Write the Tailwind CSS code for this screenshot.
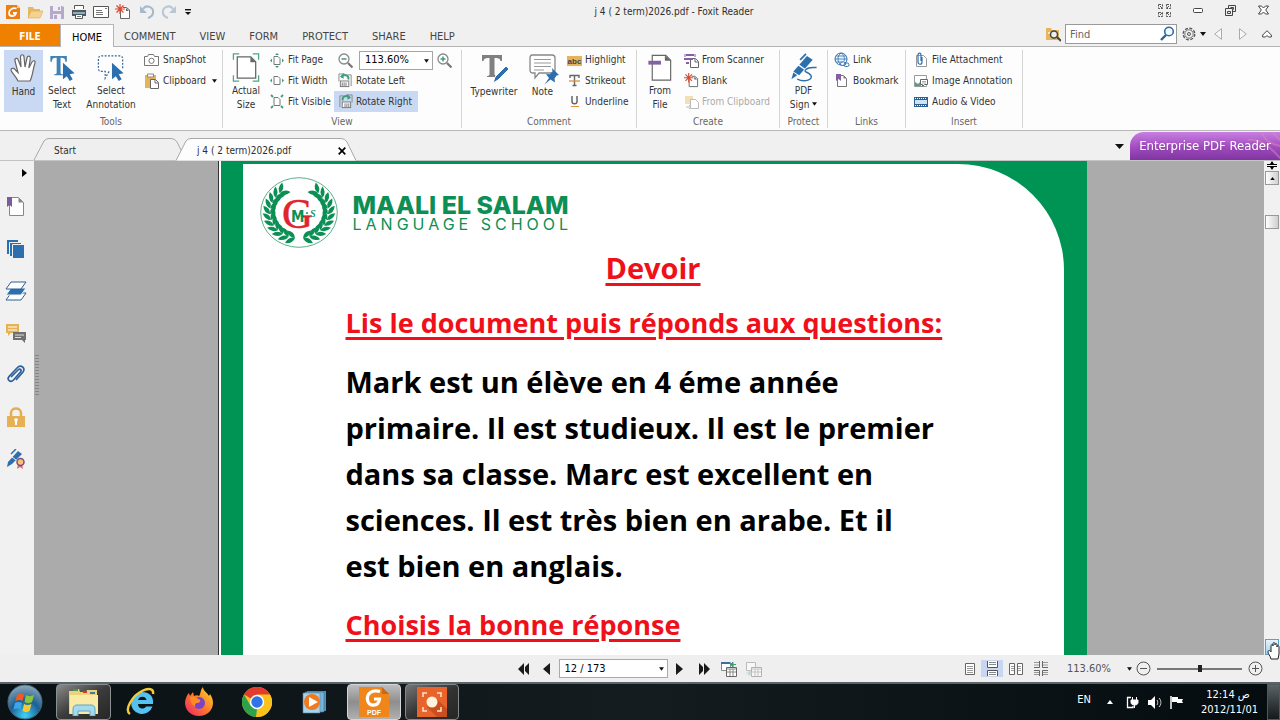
<!DOCTYPE html>
<html lang="en">
<head>
  <meta charset="UTF-8">
  <meta name="viewport" content="width=device-width, initial-scale=1.0">
  <title>j 4 ( 2 term)2026.pdf - Foxit Reader</title>
  <script src="https://cdn.jsdelivr.net/npm/@tailwindcss/browser@4"></script>
</head>
<body class="h-screen flex flex-col overflow-hidden bg-[#f0f0f0] font-['DejaVu_Sans_Condensed','Open_Sans',sans-serif] text-[10px] leading-[14px] text-[#2e2e2e]">

  <!-- Shared icons -->
  <svg class="hidden">
    <symbol id="down" viewBox="0 0 6 4"><path d="M0 0h6L3 4z" fill="#111"/></symbol>
    <symbol id="rotate" viewBox="0 0 16 16">
      <path d="M1 9V1h6M10 2h4v12" fill="none" stroke="#888"/>
      <rect x="2.500" y="8.500" width="9" height="6" fill="#fff" stroke="#777"/><path d="M4.500 10v4M6.500 10v4M8.500 10v4" stroke="#777"/>
      <path d="M11 7c1-4-3-6-6-4" fill="none" stroke="#3f9d78" stroke-width="2"/><path d="M6 0v6L2 4z" fill="#3f9d78"/>
    </symbol>
    <symbol id="pen" viewBox="0 0 30 32">
      <path d="M2 27l2-7 4 3z" fill="#2d6fae"/><path d="M4 19L18 3l6 4-14 16z" fill="#2d6fae"/>
      <path d="M9 12l7 5" stroke="#fff" stroke-width="1.300"/><path d="M11 7l6-6" stroke="#2d6fae" stroke-width="1.800"/>
      <path d="M8 27c8 4 17 0 14-4s-8-3-5-6 7-2 11-2" fill="none" stroke="#2d6fae" stroke-width="1.500"/>
    </symbol>
  </svg>

  <!-- Title bar -->
  <header class="h-6 shrink-0 flex items-center relative">
    <div class="flex items-center gap-[6px] pl-[5px]">
      <svg class="size-4" viewBox="0 0 16 16"><path d="M1 1h11l3 3v11H1z" fill="#ee7d12"/><path d="M12 1v3h3z" fill="#f8c48c"/><path d="M11.500 4.500C8 3.500 4 5.500 4 9c0 4 6 4 7 0H8" fill="none" stroke="#fff" stroke-width="1.800"/></svg>
      <svg class="size-4" viewBox="0 0 16 16"><path d="M1 14V3h5l1 2h6v3" fill="#e9b864"/><path d="M1 14L4 7h12l-3 7z" fill="#f7d28e" stroke="#dba850" stroke-width=".6"/></svg>
      <svg class="size-4" viewBox="0 0 16 16"><path d="M1 2h12l2 1v12H1z" fill="#b5a9cc"/><path d="M4 2h8v5H4zM4 10h8v5H4z" fill="#f0edf5"/><path d="M9 3h2v3H9zM5 11h3v4H5z" fill="#b5a9cc"/></svg>
      <svg class="size-4" viewBox="0 0 16 16"><path d="M3.500 5V1.500h9V5" fill="#fff" stroke="#555"/><path d="M1 6h14v6H1z" fill="#555"/><path d="M2 8h12v2H2z" fill="#7fb2cf"/><path d="M4.500 10.500h7v4h-7z" fill="#fff" stroke="#555"/><path d="M6 12.500h4" stroke="#777"/></svg>
      <svg class="size-4" viewBox="0 0 16 16"><path d="M.5 2.500h15v11H.5z" fill="#fff" stroke="#555"/><path d="M3 6.500h6M3 8.500h7M3 10.500h7M12 4.500h2" stroke="#777"/></svg>
      <svg class="size-4" viewBox="0 0 16 16"><path d="M5.500 5.500V14.500h9V6l-3-2.500H8" fill="#fff" stroke="#666"/><path d="M11 4v3h3z" fill="#666"/><path d="M5 0v10M0 5h10M1.500 1.500l7 7M8.500 1.500l-7 7" stroke="#d94a32" stroke-width="1.200"/></svg>
      <svg class="size-4 ml-[2px]" viewBox="0 0 16 16"><path d="M4 5c3-5 11-2 10 4-.4 3-2 4-5 5" fill="none" stroke="#a5b8cc" stroke-width="2"/><path d="M1 2v7h7z" fill="#a5b8cc"/></svg>
      <svg class="size-4" viewBox="0 0 16 16"><path d="M12 5C9 0 1 3 2 9c.4 3 2 4 5 5" fill="none" stroke="#b9c6d3" stroke-width="2"/><path d="M15 2v7H8z" fill="#b9c6d3"/></svg>
      <svg class="w-[6px] h-[7px] ml-[2px]" viewBox="0 0 6 7"><path d="M0 .7h6" stroke="#111" stroke-width="1.400"/><path d="M0 3h6L3 6z" fill="#111"/></svg>
    </div>
    <h1 class="absolute left-1/2 -translate-x-1/2 ml-[34px]">j 4 ( 2 term)2026.pdf - Foxit Reader</h1>
    <div class="ml-auto flex items-center gap-[22px] pr-[11px] pb-1">
      <svg class="size-[13px]" viewBox="0 0 13 13" fill="none" stroke="#555"><path d="M.5.500h4v4h-4zM8.500.500h4v4h-4zM.5 8.500h4v4h-4zM8.500 8.500h4v4h-4z" stroke-dasharray="2.500 1"/><path d="M2 2l2 2M11 2L9 4M2 11l2-2M11 11L9 9"/></svg>
      <svg class="w-[10px] h-[5px]" viewBox="0 0 10 5"><rect x=".5" y=".5" width="9" height="4" rx="1" fill="#fff" stroke="#444"/></svg>
      <svg class="size-[11px]" viewBox="0 0 11 11" fill="#f0f0f0" stroke="#444"><path d="M3.500.5h7v6h-7z"/><path d="M5.500 2.500h3v2"/><path d="M.5 3.500h7v7h-7z"/><path d="M2.500 6.500h3v2h-3z"/></svg>
      <svg class="w-[11px] h-[10px]" viewBox="0 0 11 10"><path d="M.5 1h3l2 2 2-2h3L7.700 5l2.800 4h-3l-2-2-2 2h-3l2.800-4z" fill="#fff" stroke="#444"/></svg>
    </div>
  </header>

  <!-- Ribbon tabs -->
  <nav class="h-[23px] shrink-0 flex items-stretch border-b border-[#b4b4b4] text-[11px]">
    <button class="w-[60px] bg-[#f08000] text-white font-bold text-[10px] pt-[3px]">FILE</button>
    <button class="w-[54px] -mb-px bg-[#fdfdfd] border border-b-0 border-[#b4b4b4] text-black pt-[3px]">HOME</button>
    <div class="flex gap-6 pl-[10px] pt-[4px] text-[#444]">
      <button>COMMENT</button>
      <button>VIEW</button>
      <button>FORM</button>
      <button>PROTECT</button>
      <button>SHARE</button>
      <button>HELP</button>
    </div>
    <div class="ml-auto flex items-center pb-[2px] pr-2">
      <svg class="size-4 mr-1" viewBox="0 0 16 16"><path d="M1 14V2h5l1 2h7v10z" fill="#e8b45c"/><path d="M3 7h8" stroke="#fbe6bd" stroke-width="2"/><circle cx="9" cy="8.500" r="3.500" fill="#eee" stroke="#444" stroke-width="1.500"/><path d="M12 11l4 4" stroke="#444" stroke-width="2"/></svg>
      <label class="relative block">
        <input type="text" placeholder="Find" aria-label="Find" class="block w-28 h-5 bg-white border border-[#9a9a9a] px-1 outline-none placeholder:text-[#666]">
        <svg class="absolute right-[2px] top-[2px] size-4" viewBox="0 0 16 16"><circle cx="10" cy="5.500" r="4.300" fill="#f4f9fd" stroke="#2a6ea8" stroke-width="1.600"/><path d="M7 9l-5 5" stroke="#2a6496" stroke-width="2.400"/></svg>
      </label>
      <button class="flex items-center gap-1 ml-[5px]" aria-label="Options">
        <svg class="size-[14px]" viewBox="0 0 14 14" fill="none" stroke="#555"><circle cx="7" cy="7" r="5.800" stroke-dasharray="3 1.500" stroke-width="1.300"/><circle cx="7" cy="7" r="4.200" stroke-width=".8"/><circle cx="7" cy="7" r="1.500"/></svg>
        <svg class="w-[6px] h-1"><use href="#down"/></svg>
      </button>
      <svg class="ml-2 w-2 h-3" viewBox="0 0 8 12"><path d="M7.500.7v10.600L.7 6z" fill="#f8f8f8" stroke="#aaa"/></svg>
      <svg class="ml-[17px] w-2 h-3" viewBox="0 0 8 12"><path d="M.5.700v10.600L7.300 6z" fill="#f8f8f8" stroke="#aaa"/></svg>
      <svg class="ml-[15px] w-[10px] h-2" viewBox="0 0 10 8"><path d="M5 .7L9.300 5v2H6.500L5 5.500 3.500 7H.7V5z" fill="#fff" stroke="#444"/></svg>
    </div>
  </nav>

  <!-- Ribbon -->
  <section class="h-[84px] shrink-0 flex bg-[#fdfdfd] border-b border-[#b8b8b8] pt-[3px] whitespace-nowrap text-[#333]">
    <div class="w-[223px] border-r border-[#d4d4d4] mb-[2px] flex flex-col">
      <div class="flex h-[62px] shrink-0 pl-1">
        <button class="w-[39px] shrink-0 bg-[#c9d9f3] flex flex-col items-center pt-[3px]">
          <svg class="size-8" viewBox="0 0 32 32"><path d="M10 28c-2-5-7-9-7-11s3-2 4-.5l3 3L7 8c-.6-3 2.500-3.500 3.300-1L13 14 12.500 4c0-3 3.300-3 3.500 0l1 10 2-9c.6-3 3.800-2 3.300.5L20.800 15 24 9c1.300-2.300 3.800-1 3 1-2 5-2 12-5 18z" fill="#fff" stroke="#666" stroke-width="1.200"/></svg>
          <span>Hand</span>
        </button>
        <button class="w-[38px] shrink-0 flex flex-col items-center pt-[3px]">
          <svg class="size-8" viewBox="0 0 32 32"><path d="M4 3h17v6h-1.500c-.5-3-1-4-5-4v15c0 1.500 1 2 2.500 2v1H8v-1c1.500 0 2.500-.5 2.500-2V5c-4 0-4.500 1-5 4H4z" fill="#3f82b8"/><path d="M17 10v17l4-3 3 5 3-2-3-5 5-1z" fill="#2d6fae"/></svg>
          <span>Select<br>Text</span>
        </button>
        <button class="w-[60px] shrink-0 flex flex-col items-center pt-[3px]">
          <svg class="size-8" viewBox="0 0 32 32"><path d="M14 19l-4 7v-7H6c-2 0-3-1-3-3V6c0-2 1-3 3-3h19c2 0 3 1 3 3v10" fill="none" stroke="#35689c" stroke-width="1.300" stroke-dasharray="2 1.500"/><path d="M17 10v17l4-3 3 5 3-2-3-5 5-1z" fill="#2d6fae"/></svg>
          <span>Select<br>Annotation</span>
        </button>
        <div class="grid grid-rows-3 pl-[3px]">
          <button class="flex items-center gap-1">
            <svg class="w-[15px] h-4" viewBox="0 0 15 16"><path d="M.5 4.500h3l1-2h5l1 2h4v9H.5z" fill="#fff" stroke="#777"/><circle cx="7.500" cy="8.800" r="2.600" fill="none" stroke="#777"/></svg>SnapShot
          </button>
          <button class="flex items-center gap-1">
            <svg class="w-[15px] h-4" viewBox="0 0 15 16"><path d="M1 2h11v13H1z" fill="#e5b45a"/><path d="M3.500 1h6v3h-6z" fill="#fff" stroke="#888"/><path d="M6.500 6.500h5l3 3v6h-8z" fill="#fff" stroke="#666"/><path d="M11 7v3h3" fill="none" stroke="#666"/></svg>Clipboard
            <svg class="w-[5px] h-1 ml-[2px]"><use href="#down"/></svg>
          </button>
        </div>
      </div>
      <div class="text-center text-[#666] pt-[3px]">Tools</div>
    </div>

    <div class="w-[239px] border-r border-[#d4d4d4] mb-[2px] flex flex-col">
      <div class="flex h-[62px] shrink-0 pl-[4px]">
        <button class="w-[38px] shrink-0 flex flex-col items-center pt-[3px]">
          <svg class="size-8" viewBox="0 0 32 32"><path d="M3 7V1h6M23 1h6v6M3 23v6h6M23 29h6v-6" fill="none" stroke="#4fa488" stroke-width="1.300"/><path d="M7 4h14l5 5v17H7z" fill="#fff" stroke="#666" stroke-width="1.300"/><path d="M20.500 4v5.500H26z" fill="#666"/></svg>
          <span>Actual<br>Size</span>
        </button>
        <div class="grid grid-rows-3 pl-[5px] w-[69px]">
          <button class="flex items-center gap-1"><svg class="w-[14px] h-[15px]" viewBox="0 0 14 15"><path d="M4 3.500h4l2 2v6H4z" fill="#fff" stroke="#777"/><path d="M7 0l2 2H5zM7 15l2-2H5zM0 7.500l2-2v4zM14 7.500l-2-2v4z" fill="#3f9d78"/></svg>Fit Page</button>
          <button class="flex items-center gap-1"><svg class="w-[14px] h-[15px]" viewBox="0 0 14 15"><path d="M4 3.500h4l2 2v6H4z" fill="#fff" stroke="#777"/><path d="M0 7.500l2-2v4zM14 7.500l-2-2v4z" fill="#3f9d78"/></svg>Fit Width</button>
          <button class="flex items-center gap-1"><svg class="w-[14px] h-[15px]" viewBox="0 0 14 15"><path d="M4 3.500h4l2 2v6H4z" fill="#fff" stroke="#777"/><path d="M1 1l2 2M13 1l-2 2M1 14l2-2M13 14l-2-2" stroke="#3f9d78" stroke-width="1.800"/></svg>Fit Visible</button>
        </div>
        <div class="grid grid-rows-3 w-[120px]">
          <div class="flex items-center pl-[4px]">
            <svg class="size-[15px] mr-[6px]" viewBox="0 0 15 15"><circle cx="6" cy="6" r="5" fill="#fff" stroke="#888" stroke-width="1.300"/><path d="M3.500 6h5" stroke="#3f9d78" stroke-width="1.500"/><path d="M10 10l4.500 4.500" stroke="#777" stroke-width="2.200"/></svg>
            <div class="relative">
              <select aria-label="Zoom level" class="block appearance-none w-[74px] h-[19px] border border-[#a5a5a5] bg-white pl-[5px] text-[11px] text-black"><option>113.60%</option></select>
              <svg class="absolute right-[4px] top-[8px] w-[5px] h-1"><use href="#down"/></svg>
            </div>
            <svg class="size-[15px] ml-1" viewBox="0 0 15 15"><circle cx="6" cy="6" r="5" fill="#fff" stroke="#888" stroke-width="1.300"/><path d="M3.500 6h5M6 3.500v5" stroke="#3f9d78" stroke-width="1.500"/><path d="M10 10l4.500 4.500" stroke="#777" stroke-width="2.200"/></svg>
          </div>
          <button class="flex items-center gap-[3px] pl-[4px]"><svg class="size-[15px]"><use href="#rotate"/></svg>Rotate Left</button>
          <button class="flex items-center gap-[3px] pl-[4px] w-[84px] bg-[#c9d9f3]"><svg class="size-[15px] -scale-x-100"><use href="#rotate"/></svg>Rotate Right</button>
        </div>
      </div>
      <div class="text-center text-[#666] pt-[3px]">View</div>
    </div>

    <div class="w-[175px] border-r border-[#d4d4d4] mb-[2px] flex flex-col">
      <div class="flex h-[62px] shrink-0 pl-[3px]">
        <button class="w-[58px] shrink-0 flex flex-col items-center pt-[3px]">
          <svg class="size-8" viewBox="0 0 32 32"><path d="M4 2h20v6h-1.500c-.5-2-1-3-6-3v16c0 1.500 1 2 2.500 2v1H9v-1c1.500 0 2.500-.5 2.500-2V5c-5 0-5.500 1-6 3H4z" fill="#808080"/><path d="M15 30l2-6L28 13l3 3-11 11z" fill="#2d6fae" stroke="#fdfdfd"/></svg>
          <span>Typewriter</span>
        </button>
        <button class="w-[39px] shrink-0 flex flex-col items-center pt-[3px]">
          <svg class="size-8" viewBox="0 0 32 32"><path d="M5 2h20c2 0 3 1 3 3v12c0 2-1 3-3 3H12l-4 5v-5H6c-2 0-3-1-3-3V5c0-2 1-3 2-3z" fill="#fff" stroke="#888" stroke-width="1.300"/><path d="M7 6.500h17M7 10h17M7 13.500h17M7 17h10" stroke="#999"/><path d="M25 15l7 7-2.500.5-2 3 .5 4-4.500-3-6 5 4.500-6.500-3-4 4 .3 2.500-3z" fill="#2d6fae"/></svg>
          <span>Note</span>
        </button>
        <div class="grid grid-rows-3 pl-[5px]">
          <button class="flex items-center gap-[3px]"><svg class="w-[15px] h-[15px]" viewBox="0 0 15 15"><path d="M0 3h15v10H0z" fill="#e5b45a"/><text x="7.500" y="11" text-anchor="middle" font-family="Liberation Sans" font-weight="bold" font-size="8" fill="#444">abc</text></svg>Highlight</button>
          <button class="flex items-center gap-[3px]"><svg class="w-[15px] h-[15px]" viewBox="0 0 15 15"><path d="M3 5V2.500h9V5M7.500 2.500v10M5.500 12.500h4" fill="none" stroke="#666" stroke-width="1.400"/><path d="M2 8h11" stroke="#e0913c" stroke-width="1.300"/></svg>Strikeout</button>
          <button class="flex items-center gap-[3px]"><svg class="w-[15px] h-[15px]" viewBox="0 0 15 15"><path d="M5 2v5.500c0 3 5 3 5 0V2" fill="none" stroke="#666" stroke-width="1.500"/><path d="M4 12.500h8" stroke="#e0913c"/></svg>Underline</button>
        </div>
      </div>
      <div class="text-center text-[#666] pt-[3px]">Comment</div>
    </div>

    <div class="w-[143px] border-r border-[#d4d4d4] mb-[2px] flex flex-col">
      <div class="flex h-[62px] shrink-0 pl-1">
        <button class="w-[38px] shrink-0 flex flex-col items-center pt-[3px]">
          <svg class="size-8" viewBox="0 0 32 32"><path d="M8 2.500h14l5 5V28H8z" fill="#fff" stroke="#666" stroke-width="1.200"/><path d="M21 2.500V8h6z" fill="#666"/><path d="M4 8h13v4H4z" fill="#8560a0"/></svg>
          <span>From<br>File</span>
        </button>
        <div class="grid grid-rows-3 pl-[5px]">
          <button class="flex items-center gap-[3px]"><svg class="size-[15px]" viewBox="0 0 15 15"><path d="M6.500 5.500h5l3 3v6h-8z" fill="#fff" stroke="#666"/><path d="M11 6v3h3" fill="none" stroke="#666"/><path d="M2 2h8M0 6h9M2 10h3" stroke="#8560a0" stroke-width="1.800"/><path d="M1 1v3M11 1v3" stroke="#8560a0"/></svg>From Scanner</button>
          <button class="flex items-center gap-[3px]"><svg class="size-[15px]" viewBox="0 0 16 16"><path d="M5.500 5.500V14.500h9V6l-3-2.500H8" fill="#fff" stroke="#666"/><path d="M11 4v3h3z" fill="#666"/><path d="M5 0v10M0 5h10M1.500 1.500l7 7M8.500 1.500l-7 7" stroke="#d94a32" stroke-width="1.200"/></svg>Blank</button>
          <button disabled class="flex items-center gap-[3px] text-[#aaa]"><svg class="size-[15px]" viewBox="0 0 15 15"><path d="M1 2h8v8H1z" fill="#f2dfb8"/><path d="M6.500 5.500h5l3 3v6h-8z" fill="#fff" stroke="#bbb"/><path d="M2 13h5M5 11l2 2-2 2" fill="none" stroke="#bbb"/></svg>From Clipboard</button>
        </div>
      </div>
      <div class="text-center text-[#666] pt-[3px]">Create</div>
    </div>

    <div class="w-[48px] border-r border-[#d4d4d4] mb-[2px] flex flex-col">
      <button class="h-[62px] shrink-0 flex flex-col items-center pt-[3px]">
        <svg class="w-[30px] h-8"><use href="#pen"/></svg>
        <span>PDF<br>Sign <svg class="inline w-[5px] h-1 mb-[2px]"><use href="#down"/></svg></span>
      </button>
      <div class="text-center text-[#666] pt-[3px]">Protect</div>
    </div>

    <div class="w-[78px] border-r border-[#d4d4d4] mb-[2px] flex flex-col">
      <div class="h-[62px] shrink-0 grid grid-rows-3 pl-[6px]">
        <button class="flex items-center gap-[3px]"><svg class="size-4" viewBox="0 0 16 16"><circle cx="7" cy="7" r="6" fill="#eef5fb" stroke="#2d6fae"/><path d="M1 7h12M2 4h10M2 10h7M7 1c-4 3-4 9 0 12M7 1c3 2 4 5 3 8" fill="none" stroke="#2d6fae" stroke-width=".8"/><rect x="6.500" y="10" width="5" height="3.500" rx="1.700" fill="#fff" stroke="#2d6fae"/><rect x="10" y="11" width="5" height="3.500" rx="1.700" fill="none" stroke="#2d6fae"/></svg>Link</button>
        <button class="flex items-center gap-[3px]"><svg class="size-4" viewBox="0 0 16 16"><path d="M3.500 2.500h6l3 3v8h-9z" fill="#fff" stroke="#777"/><path d="M9.500 2.500v3h3z" fill="#777"/><path d="M2 1h5v7L4.500 6 2 8z" fill="#8560a0"/></svg>Bookmark</button>
      </div>
      <div class="text-center text-[#666] pt-[3px]">Links</div>
    </div>

    <div class="w-[117px] border-r border-[#d4d4d4] mb-[2px] flex flex-col">
      <div class="h-[62px] shrink-0 grid grid-rows-3 pl-[7px]">
        <button class="flex items-center gap-[3px]"><svg class="size-4" viewBox="0 0 16 16"><path d="M3.500 3.500h7l3 3v8h-10z" fill="#fff" stroke="#999"/><path d="M9 5v5c0 3-4 3-4 0V3c0-2.500 3-2.500 3 0v6" fill="none" stroke="#2d6fae" stroke-width="1.200"/></svg>File Attachment</button>
        <button class="flex items-center gap-[3px]"><svg class="size-4" viewBox="0 0 16 16"><path d="M1.500 2.500h12v11h-12z" fill="#fff" stroke="#999"/><path d="M2 13V9l3 2 3-3v5z" fill="#4fa37f"/><path d="M7.500 6.500h7v5h-3l-2 2v-2h-2z" fill="#fff" stroke="#666"/><path d="M9 8.500h4M9 10h4" stroke="#888" stroke-width=".7"/></svg>Image Annotation</button>
        <button class="flex items-center gap-[3px]"><svg class="size-4" viewBox="0 0 16 16"><path d="M1 3h14v10H1z" fill="#2f6092"/><path d="M2 6h12v4H2z" fill="#cfe3f4"/><path d="M2 4.500h12M2 11.500h12" stroke="#fff" stroke-dasharray="1 1"/></svg>Audio &amp; Video</button>
      </div>
      <div class="text-center text-[#666] pt-[3px]">Insert</div>
    </div>
  </section>

  <!-- Document tabs -->
  <div class="h-[30px] shrink-0 flex items-end justify-between border-b border-[#c4c4c4]">
    <div class="flex items-end pl-[34px] h-full">
      <div class="relative w-[148px] h-[22px] flex items-center pt-1">
        <svg class="absolute inset-0 w-[152px] h-[22px] overflow-visible" viewBox="0 0 152 22"><path d="M0 22L10 3Q12 .5 15 .5H137Q141 .5 143 4L152 22" fill="#efefef" stroke="#a8a8a8"/></svg>
        <button class="relative pl-[20px]">Start</button>
      </div>
      <div class="relative -ml-[6px] w-[180px] h-[22px] flex items-center pt-1">
        <svg class="absolute inset-0 w-[180px] h-[22px] overflow-visible" viewBox="0 0 180 22"><path d="M0 22.500L10 3Q12 .5 15 .5H165Q169 .5 171 4L180 22.500" fill="#fdfdfd" stroke="#a8a8a8"/></svg>
        <button class="relative pl-[21px]">j 4 ( 2 term)2026.pdf</button>
        <button class="relative ml-auto mr-[10px]" aria-label="Close tab"><svg class="size-2" viewBox="0 0 8 8"><path d="M.7.700l6.600 6.600M7.300.700L.7 7.300" stroke="#000" stroke-width="1.700"/></svg></button>
      </div>
    </div>
    <div class="flex items-center">
      <svg class="w-[9px] h-[5px] mr-[6px]" viewBox="0 0 6 4" preserveAspectRatio="none"><path d="M0 0h6L3 4z" fill="#111"/></svg>
      <a href="#" class="relative w-[150px] h-[28px] flex items-center justify-center overflow-hidden bg-gradient-to-b from-[#c77fe0] via-[#a64fc4] to-[#7f35a0] text-white text-[13px] whitespace-nowrap rounded-tl-[14px]">
        <svg class="absolute right-0 top-0 w-10 h-7" viewBox="0 0 40 28" fill="none" stroke="#d98bb0" stroke-width="2" opacity=".5"><path d="M8 8c10-2 20 4 32 18M22 0c2 8 8 12 18 14M32 0l8 8"/></svg>
        <span class="relative drop-shadow-sm">Enterprise PDF Reader</span>
      </a>
    </div>
  </div>

  <!-- Work area -->
  <main class="flex-1 min-h-0 flex">
    <aside class="w-[34px] shrink-0 flex flex-col items-center bg-[#f1f1f1] pt-2">
      <svg class="w-[5px] h-2 ml-[14px] mb-[20px]" viewBox="0 0 5 8"><path d="M0 0v8l5-4z" fill="#000"/></svg>
      <div class="flex flex-col gap-[22px] pr-[2px]">
        <svg class="size-5" viewBox="0 0 20 20"><path d="M3.500.500h9l5 5v13h-14z" fill="#fff" stroke="#888"/><path d="M12.500.500v5h5z" fill="#888"/><path d="M1 0h5v10L3.500 8 1 10z" fill="#7d5a9c"/></svg>
        <svg class="size-5" viewBox="0 0 20 20"><path d="M1 1h11v14H1z" fill="#2d6fae"/><path d="M3.500 3.500h12v14h-12z" fill="#2d6fae" stroke="#f1f1f1"/><path d="M6.500 5.500h12v14h-12z" fill="#2d6fae" stroke="#f1f1f1"/></svg>
        <svg class="w-[22px] h-5 -mx-px" viewBox="0 0 22 20"><path d="M6 12h15l-5 7H1z" fill="#fff" stroke="#2d5f94"/><path d="M6 7h15l-5 7H1z" fill="#2d6fae" stroke="#f1f1f1"/><path d="M6 1h15l-5 7H1z" fill="#fff" stroke="#2d5f94"/></svg>
        <svg class="size-5" viewBox="0 0 20 20"><path d="M0 1h13v9H5l-3 3v-3H0z" fill="#e5b257"/><path d="M2 4h9M2 7h9" stroke="#fff"/><path d="M7 9h13v8h-1v3l-3-3H7z" fill="#707070"/><path d="M9 12h9M9 14.500h6" stroke="#ddd"/></svg>
        <svg class="size-5" viewBox="0 0 20 20"><path d="M5 12l7-7c2-2 4 0 2.500 2l-7 8c-3 3-7 0-4.500-3.500L11 3c4-4 9 0 6 4l-7 8" fill="none" stroke="#2d5f9c" stroke-width="1.700"/></svg>
        <svg class="size-5" viewBox="0 0 20 20"><path d="M5 10V6c0-6 10-6 10 0v4" fill="none" stroke="#e3ae52" stroke-width="2.500"/><path d="M1 9h18v11H1z" fill="#e8b055"/><circle cx="10" cy="13" r="1.800" fill="#fff"/><path d="M10 13v5" stroke="#fff" stroke-width="2"/></svg>
        <svg class="size-5" viewBox="0 0 20 20"><path d="M1 18l1-5L12 2l4 3L6 15z" fill="#2d6fae"/><path d="M6 8l4 3" stroke="#f1f1f1"/><path d="M5 5l5-5" stroke="#2d6fae" stroke-width="1.500"/><path d="M12 15l-1 5 3-2 3 2-1-5z" fill="#d66"/><circle cx="14.500" cy="13" r="3.500" fill="#f4c46a" stroke="#7d4a94" stroke-width="1.500"/></svg>
      </div>
    </aside>

    <div class="flex-1 min-w-0 flex bg-[#ababab] overflow-hidden">
      <div class="w-[6px] shrink-0 flex flex-col justify-center items-center pb-[66px]">
        <svg class="w-1 h-[41px]" viewBox="0 0 4 41"><path d="M2 0v41" stroke="#868686" stroke-width="4" stroke-dasharray="1 2"/></svg>
      </div>
      <article class="mx-auto w-[869px] shrink-0 border-l border-l-[#333]">
        <div class="h-full bg-[#009454] border-l-2 border-l-white pl-[22px] pr-[23px] pt-[3px]">
          <div class="h-full bg-white rounded-tr-[106px] overflow-hidden text-black font-['Comic_Sans_MS','Open_Sans',sans-serif] font-bold text-[27px] leading-[46px]">
            <div class="flex items-center pl-[17px] pt-[13px]">
              <svg class="w-[78px] h-[71px]" viewBox="0 0 78 71">
                <ellipse cx="39" cy="35.500" rx="38.300" ry="34.800" fill="#fff" stroke="#2f9a6b" stroke-width=".8"/>
                <g id="wreath" fill="#0c8f55"></g>
                <text x="22" y="51" font-family="Liberation Serif" font-weight="normal" font-size="43" fill="#e0242c" stroke="#e0242c" stroke-width=".5">G</text>
                <text x="31" y="45" font-family="DejaVu Sans Condensed" font-size="15" fill="#0c8f55">M</text>
                <text x="50" y="40" font-family="Liberation Serif" font-weight="normal" font-style="italic" font-size="15" fill="#0c8f55">s</text>
                <circle cx="47" cy="36" r="1" fill="#0c8f55"/>
              </svg>
              <div class="pl-[15px] pt-[2px] text-[#0c8f55] font-[Inter,sans-serif] whitespace-nowrap">
                <div class="text-[25px] leading-[20px] font-extrabold">MAALI EL SALAM</div>
                <div class="text-[16px] leading-[18px] font-normal tracking-[4px]">LANGUAGE SCHOOL</div>
              </div>
            </div>
            <div class="px-[103px] whitespace-nowrap">
              <h2 class="-mt-px text-center text-[29px] leading-[42px] text-[#f0101a] underline decoration-[3px] underline-offset-[4px]">Devoir</h2>
              <h3 class="mt-[11px] text-[#f0101a] underline decoration-[3px] underline-offset-[4px]">Lis le document puis réponds aux questions:</h3>
              <p class="mt-[13px] text-[29px]">Mark est un élève en 4 éme année<br>primaire. Il est studieux. Il est le premier<br>dans sa classe. Marc est excellent en<br>sciences. Il est très bien en arabe. Et il<br>est bien en anglais.</p>
              <h3 class="mt-[13px] text-[#f0101a] underline decoration-[3px] underline-offset-[4px]">Choisis la bonne réponse</h3>
            </div>
          </div>
        </div>
      </article>
    </div>

    <!-- Scroll bar -->
    <div class="w-4 shrink-0 bg-[#f1f1f1] flex flex-col items-center">
      <svg class="w-[10px] h-[9px]" viewBox="0 0 10 9"><path d="M0 3.500h10M0 5.500h10" stroke="#000"/><path d="M5 0l2 3H3zM5 9l2-3H3z" fill="#000"/></svg>
      <button aria-label="Scroll up" class="mt-px size-[14px] border border-[#999] bg-gradient-to-r from-white to-[#d0d0d0] flex items-center justify-center"><svg class="w-[5px] h-[3px] rotate-180"><use href="#down"/></svg></button>
      <div class="mt-[30px] size-[14px] border border-[#999] bg-gradient-to-r from-white to-[#cfcfcf]"></div>
      <button aria-label="Scroll down" class="relative mt-auto w-[14px] h-4 border border-[#5f9fc0] bg-gradient-to-b from-[#e6f5fc] to-[#9ed2ee]">
        <svg class="absolute left-[2px] top-[2px] w-[15px] h-[19px] overflow-visible z-10" viewBox="0 0 15 19"><path d="M3 17C2 13 0 12 0 10s2-2 3 0V4c0-2 2-2 2 0V2c0-2 2-2 2 0v1c0-2 2-2 2 0v2c0-2 2-2 2 0v7l-1 5z" fill="#fff" stroke="#222"/></svg>
      </button>
    </div>
  </main>

  <!-- Status bar -->
  <footer class="h-[27px] shrink-0 flex items-center bg-[#efefef] text-[11px]">
    <div class="flex-1"></div>
    <div class="flex items-center pl-[16px]">
      <button aria-label="First page"><svg class="w-3 h-3" viewBox="0 0 12 12"><path d="M6 0v12L0 6zM11 0v12L7 8V4z" fill="#1a1a1a"/></svg></button>
      <button aria-label="Previous page" class="ml-[13px]"><svg class="w-[7px] h-3" viewBox="0 0 7 12"><path d="M7 0v12L0 6z" fill="#1a1a1a"/></svg></button>
      <div class="relative ml-[9px]">
        <select aria-label="Page" class="block appearance-none w-[109px] h-[19px] bg-white border border-[#aaa] pl-[5px] text-black"><option>12 / 173</option></select>
        <svg class="absolute right-[4px] top-[8px] w-[5px] h-1"><use href="#down"/></svg>
      </div>
      <button aria-label="Next page" class="ml-2"><svg class="w-[7px] h-3" viewBox="0 0 7 12"><path d="M0 0v12l7-6z" fill="#1a1a1a"/></svg></button>
      <button aria-label="Last page" class="ml-[15px]"><svg class="w-3 h-3" viewBox="0 0 12 12"><path d="M6 0v12l6-6zM1 0v12l4-4V4z" fill="#1a1a1a"/></svg></button>
      <svg class="ml-[11px] w-4 h-4" viewBox="0 0 16 16"><path d="M.5 1.500h9v8h-9z" fill="#fff" stroke="#888"/><path d="M0 1h9v2H0z" fill="#3a6f9f"/><path d="M5.500 6.500h10v9h-10z" fill="#fff" stroke="#666"/><path d="M6 8h9M6 11h9M9 8v7M12 8v7" stroke="#888"/><path d="M15 3.500h-4M12 1L9.500 3.500 12 6z" fill="#3f9d78" stroke="#3f9d78"/></svg>
      <svg class="ml-[9px] w-4 h-4" viewBox="0 0 16 16" opacity=".5"><path d="M.5 1.500h9v8h-9z" fill="#fff" stroke="#888"/><path d="M5.500 6.500h10v9h-10z" fill="#fff" stroke="#777"/><path d="M6 8h9M6 11h9M9 8v7M12 8v7" stroke="#999"/><path d="M0 12h5M3 9.500L5.500 12 3 14.500z" fill="#9bb" stroke="#9bb"/></svg>
    </div>
    <div class="flex-1 flex items-center justify-end pr-[17px]">
      <button aria-label="Single page" class="w-[22px] h-[17px] flex justify-center items-center"><svg class="w-[10px] h-3" viewBox="0 0 10 12"><path d="M.5.500h9v11h-9z" fill="#fff" stroke="#666"/><path d="M2 3.500h6M2 5.500h6M2 7.500h6M2 9.500h6" stroke="#999"/></svg></button>
      <button aria-label="Continuous" class="w-[22px] h-[17px] flex justify-center items-center bg-[#c9d6ef]"><svg class="w-[11px] h-[15px]" viewBox="0 0 11 15"><path d="M.5 0v6.500h10V0M.5 15V9.500h10V15" fill="#fff" stroke="#555"/><path d="M2 1.500h7M2 3.500h7M2 11.500h7M2 13.500h7" stroke="#888"/></svg></button>
      <button aria-label="Facing" class="w-[26px] h-[17px] flex justify-center items-center"><svg class="w-[14px] h-3" viewBox="0 0 14 12"><path d="M.5.500h5v11h-5zM8.500.500h5v11h-5z" fill="#fff" stroke="#666"/><path d="M2 3.500h3M2 5.500h3M2 7.500h3M9 3.500h3M9 5.500h3M9 7.500h3" stroke="#999"/></svg></button>
      <button aria-label="Continuous facing" class="w-[23px] h-[17px] flex justify-center items-center"><svg class="w-[14px] h-[15px]" viewBox="0 0 14 15"><path d="M5.500 0v6.500H0M8.500 0v6.500H14M5.500 15V9.500H0M8.500 15V9.500H14" fill="none" stroke="#666"/><path d="M0 1.500h5M0 4h5M9 1.500h5M9 4h5M0 11.500h5M0 13.500h5M9 11.500h5M9 13.500h5" stroke="#999"/></svg></button>
      <span class="ml-[15px] w-[60px] text-[#555]">113.60%</span>
      <svg class="w-[5px] h-1 mr-[4px]"><use href="#down"/></svg>
      <button aria-label="Zoom out"><svg class="size-[15px]" viewBox="0 0 15 15" fill="none" stroke="#555"><circle cx="7.500" cy="7.500" r="6.500"/><path d="M4 7.500h7"/></svg></button>
      <input type="range" aria-label="Zoom" class="mx-[6px] w-[85px] h-[2px] appearance-none bg-[#777] [&::-webkit-slider-thumb]:appearance-none [&::-webkit-slider-thumb]:w-1 [&::-webkit-slider-thumb]:h-[7px] [&::-webkit-slider-thumb]:bg-[#222]">
      <button aria-label="Zoom in"><svg class="size-[15px]" viewBox="0 0 15 15" fill="none" stroke="#555"><circle cx="7.500" cy="7.500" r="6.500"/><path d="M4 7.500h7M7.500 4v7"/></svg></button>
    </div>
  </footer>

  <!-- Taskbar -->
  <div class="h-[38px] shrink-0 flex items-center bg-gradient-to-r from-[#0a1115] via-[#141c20] to-[#050c10] border-t-2 border-[#59636a] text-white">
    <div class="flex items-center h-full">
      <button aria-label="Start" class="w-[50px] flex justify-center">
        <svg class="size-9" viewBox="0 0 36 36">
          <defs><radialGradient id="orb" cx=".5" cy=".9" r=".9"><stop offset="0" stop-color="#3bd5fb"/><stop offset=".5" stop-color="#1d5f92"/><stop offset="1" stop-color="#8fa9ba"/></radialGradient></defs>
          <circle cx="18" cy="18" r="17" fill="url(#orb)" stroke="#44697c"/>
          <path d="M10 11c2-2 5-2 7-.5l-1.500 6.500c-2-1.500-5-1.500-7 0z" fill="#ee5b25"/><path d="M19 11c2 1.500 5 1.500 8 0l-2 7c-2 1.500-5 1.500-7.500 0z" fill="#8bc53f"/>
          <path d="M8 19c2-1.500 5-1.500 7 0l-1.500 6.500c-2-1.500-5-1.500-7 0z" fill="#3fa4e8"/><path d="M17 20c2 1.500 5 1.500 7.500 0l-2 7c-2 1.500-5 1.500-7 0z" fill="#fdc82f"/>
        </svg>
      </button>
      <button aria-label="Explorer" class="ml-[6px] w-[55px] h-9 rounded-sm border border-[#8a8f92] bg-gradient-to-br from-[#8b8b8b] via-[#3b3b3b] to-[#262626] flex justify-center items-center">
        <svg class="w-8 h-7" viewBox="0 0 32 28"><path d="M1 3h5l1-2h4l1 3 6 0 1-2h10v24H1z" fill="#ecd27a"/><path d="M2 7h28v19H2z" fill="#f9eba6"/><path d="M5 1h5v2H5z" fill="#3aa14a"/><path d="M15 3h4v2h-4z" fill="#d33"/><path d="M22 4h5v2h-5z" fill="#47a"/><path d="M5 28v-7c0-3 2-4 4-4h14c2 0 4 1 4 4v7h-5v-5H10v5z" fill="#a5d9ee" stroke="#5fa5c8"/></svg>
      </button>
      <button aria-label="Internet Explorer" class="w-[60px] flex justify-center">
        <svg class="size-[30px]" viewBox="0 0 30 30"><path d="M16 5a11 11 0 1 0 10.500 14.500h-6.500c-2 3.500-8 2.500-8-2.500h15C28 9 23 5 16 5zm-4 8c1-4.500 8-4.500 8.500 0z" fill="#54c1f0"/><path d="M4 27C-2 23 6 9 16 4c6-3 12-3 11 3" fill="none" stroke="#f5cb32" stroke-width="2.400"/></svg>
      </button>
      <button aria-label="Firefox" class="w-[56px] flex justify-center">
        <svg class="size-[30px]" viewBox="0 0 30 30"><defs><linearGradient id="fox" x1="1" y1="0" x2="0" y2="1"><stop offset="0" stop-color="#ffe226"/><stop offset=".5" stop-color="#ff7a2a"/><stop offset="1" stop-color="#ee1c6a"/></linearGradient></defs><path d="M15 29C7 29 1 23 1 16 1 12 3 8 5 6l1 3 3-4 1 4c2-1 4-1 5 0 2-2 1-6 4-9 0 4 4 5 6 9l1-2c2 3 3 6 3 9 0 7-6 13-14 13z" fill="url(#fox)"/><circle cx="15" cy="16" r="6" fill="#7a44c9"/><path d="M6 10c3 0 6-1 8 2 3 0 3 3 0 4-3 0-4 2-2 4-4-1-6-6-6-10z" fill="#ff8a26"/></svg>
      </button>
      <button aria-label="Chrome" class="w-[60px] flex justify-center">
        <svg class="size-[30px]" viewBox="0 0 30 30"><circle cx="15" cy="15" r="15" fill="#fbc21c"/><path d="M15 15L2 7.500a15 15 0 0 1 26 0z" fill="#e33b2e"/><path d="M2 7.500L8.500 18.500 15 22l-1 8A15 15 0 0 1 2 7.500z" fill="#2da24c"/><path d="M15 7.500h13a15 15 0 0 1-14 22.500l7-12z" fill="#fbc21c"/><circle cx="15" cy="15" r="7.200" fill="#fff"/><circle cx="15" cy="15" r="5.700" fill="#2d74e7"/></svg>
      </button>
      <button aria-label="Media Player" class="w-[55px] flex justify-center">
        <svg class="w-[25px] h-6" viewBox="0 0 25 24"><path d="M5 1h19v20H5z" fill="#4f94bd"/><path d="M3 2h19v20H3z" fill="#79b4d6" stroke="#346f96" stroke-width=".6"/><path d="M1 3h17v20H1z" fill="#a9d3e8" stroke="#4685ab" stroke-width=".6"/><circle cx="10" cy="12" r="8" fill="#ef7a22"/><path d="M7 7l9 5-9 5z" fill="#fff"/></svg>
      </button>
      <button aria-label="Foxit Reader" class="ml-[5px] w-[54px] h-9 rounded-sm border border-[#d5d5d5] bg-gradient-to-b from-[#bdbdbd] via-[#8e8e8e] to-[#b0b0b0] flex justify-center items-center">
        <svg class="size-[30px]" viewBox="0 0 30 30"><path d="M0 0h23l7 7v23H0z" fill="#f08519"/><path d="M23 0v7h7z" fill="#c96a12"/><path d="M21 4.500C13 2 7.500 7 8.500 13c1 7 11 7 12-1h-5.500" fill="none" stroke="#fff" stroke-width="3.200"/><text x="15" y="28" text-anchor="middle" font-family="Liberation Sans" font-weight="bold" font-size="7" fill="#fff">PDF</text></svg>
      </button>
      <button aria-label="Screen recorder" class="ml-1 w-[54px] h-9 rounded-sm border border-[#83888b] bg-gradient-to-br from-[#777] via-[#333] to-[#262626] flex justify-center items-center">
        <svg class="size-[30px]" viewBox="0 0 30 30"><path d="M0 0h30v30H0z" fill="#e8642b"/><path d="M10 20l9-9 11 11v8H20z" fill="#c94f1e"/><circle cx="15" cy="15" r="5.500" fill="#fff3dc"/><path d="M6 10V6h4M20 6h4v4M6 20v4h4M20 24h4v-4" fill="none" stroke="#ffe3cc" stroke-width="1.500"/></svg>
      </button>
    </div>
    <div class="ml-auto flex items-center h-full text-[11px]">
      <span class="mr-4 pb-1">EN</span>
      <svg class="w-[6px] h-1 mr-[13px]" viewBox="0 0 6 4"><path d="M0 4h6L3 0z" fill="#fff"/></svg>
      <svg class="w-[13px] h-[13px] mr-[9px]" viewBox="0 0 13 13"><path d="M5 1.500H1.500v10H7V10" fill="none" stroke="#fff" stroke-width="1.300"/><path d="M5 4h7v2c0 2-1 3-3.500 3S5 8 5 6zM6.500 1v3M10.500 1v3M8.500 9v3" fill="#fff" stroke="#fff"/></svg>
      <svg class="w-[14px] h-[13px] mr-[8px]" viewBox="0 0 14 13"><path d="M0 4h3l4-4v13L3 9H0z" fill="#fff"/><path d="M9 4c1 1.500 1 3.500 0 5M11 2c2.500 2.500 2.500 6.500 0 9" fill="none" stroke="#ccc"/></svg>
      <svg class="w-[14px] h-[13px] mr-[17px]" viewBox="0 0 14 13"><path d="M1 0v13" stroke="#fff" stroke-width="1.500"/><path d="M2 1h6v2h5l-1 2 1 2H7V6H2z" fill="#fff"/></svg>
      <div class="w-[54px] text-center leading-[15px] whitespace-nowrap">
        <div dir="rtl">ص 12:14</div>
        <div>2012/11/01</div>
      </div>
      <button aria-label="Show desktop" class="ml-3 w-[13px] h-full border border-[#50585c] bg-gradient-to-b from-[#5c6367] to-[#15191b]"></button>
    </div>
  </div>

  <script>
    // Laurel wreath of the school crest: leaf pairs up the right arc, mirrored for the left
    const leaf = 'M0 0Q5 -4.600 11 0Q5 4 0 0';
    let branch = '';
    for (let i = 0; i < 11; i++) {
      const deg = -82 + i * 13;
      const a = deg * Math.PI / 180;
      const x = 39 + Math.cos(a) * 29;
      const y = 35.5 - Math.sin(a) * 26;
      const up = Math.atan2(-Math.cos(a), -Math.sin(a)) * 180 / Math.PI;
      for (const lean of [-36, 34]) {
        branch += `<path d="${leaf}" transform="translate(${x} ${y}) rotate(${up + lean})"/>`;
      }
    }
    document.getElementById('wreath').innerHTML = `<g>${branch}</g><g transform="translate(78 0) scale(-1 1)">${branch}</g>`;
  </script>
</body>
</html>
